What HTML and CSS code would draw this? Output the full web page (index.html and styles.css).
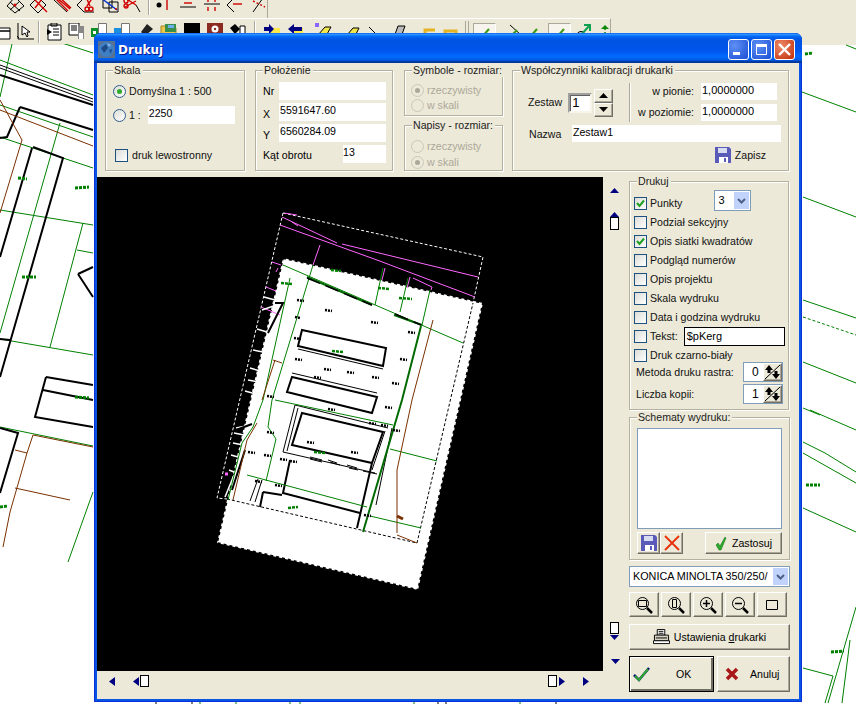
FILE: index.html
```html
<!DOCTYPE html>
<html lang="pl">
<head>
<meta charset="utf-8">
<title>Drukuj</title>
<link rel="stylesheet" href="styles.css">
</head>
<body>
<div class="desktop">
  <svg class="map" width="856" height="704" viewBox="0 0 856 704">
    <g class="g1">
      <path d="M0 60L93 95M12 44L0 97M0 105L93 137M0 137L93 168M0 210L93 225M60 123L0 333M0 339L93 355M83 223L50 347M77 250L93 253M0 427L93 446M93 492L68 562M62 43L93 53"/>
      <path d="M803 197L856 217M803 300L856 318M803 362L856 383M803 408L820 415M810 410L856 430M803 442L825 453L856 472M803 453L856 483M803 508L856 532M856 607L828 703M803 668L833 676L825 703M802 92L856 112M846 45L856 49M850 640L842 703"/>
      <path class="dash" d="M803 317L856 335"/>
      <path d="M200 702V704M236 702V704M290 702V704M300 702V704M414 702V704M520 702V704"/>
    </g>
    <g class="b1"><path d="M0 65L93 99M0 68L93 102M156 702V704M192 702V704M326 700H332M421 700H427M438 702V704M446 702V704M556 702V704M560 700H568"/></g>
    <g class="b2">
      <path d="M0 75L93 105M20 107L93 130M20 107L7 137L0 138M32 148L0 257M33 147L63 158L0 377M0 339L10 340M78 274L93 267M78 274L93 297M46 377L93 385M46 377L35 417L93 427M43 390L93 400M0 428L18 433L0 493"/>
    </g>
    <g class="br">
      <path d="M0 110L93 146M0 100L22 140L0 213M33 435L27 453L10 512L3 547M15 488L70 500M15 450L27 453M33 435L93 447"/>
    </g>
    <g class="lb">
      <path d="M18 178l9 1M75 188l14-1M22 277l14 0M75 397l14 1M0 507l8-1M805 54l8-1M806 485l14 0M831 652l13-1"/>
    </g>
  </svg>

  <div class="bars">
    <div class="tb tb1">
      <span class="tbtn first1"><svg width="20" height="16" viewBox="0 0 20 16"><path class="i-k" d="M1 8L9-1L18 8L9 15ZM4 4L14 13M14 3L4 12"/><circle cx="9" cy="7" r="1.500" fill="#d00"/></svg></span>
      <span class="tbtn"><svg width="20" height="16" viewBox="0 0 20 16"><path class="i-k" d="M1 7L9-1L17 7L9 15Z"/><path class="i-r" d="M4 0L18 14M13 1L6 10"/></svg></span>
      <span class="tbtn"><svg width="20" height="16" viewBox="0 0 20 16"><path class="i-r" d="M2 0L15 13M4 0L17 11M6-1L18 10"/><path class="i-k" d="M1 2L14 14"/></svg></span>
      <span class="tbtn"><svg width="20" height="16" viewBox="0 0 20 16"><path class="i-k" d="M1 7L8 0M1 7L8 14L18 14"/><path class="i-r" d="M10-1L14 8M17-1L11 8"/><circle class="i-r" cx="11" cy="11" r="2"/><circle class="i-r" cx="15" cy="11" r="2"/></svg></span>
      <span class="tbtn"><svg width="20" height="16" viewBox="0 0 20 16"><path class="i-k" d="M3 0H12V10H3ZM9 4H18V14H9Z"/><path class="i-b" d="M1 0L17 12"/><circle cx="16" cy="11" r="1" fill="#d00"/></svg></span>
      <span class="tbtn"><svg width="20" height="16" viewBox="0 0 20 16"><path class="i-r" d="M2 0L13 7M2 9L13 3"/><circle class="i-r" cx="3" cy="3" r="2"/><circle class="i-r" cx="3" cy="8" r="2"/><path class="i-k" d="M13 7L17 14"/></svg></span>
      <span class="sep sep1"></span>
      <span class="tbtn"><svg width="18" height="16" viewBox="0 0 18 16"><circle cx="3" cy="7" r="2.500" fill="#000"/><path class="i-r" d="M11 0V12"/></svg></span>
      <span class="tbtn"><svg width="18" height="16" viewBox="0 0 18 16"><path class="i-r" d="M5 5H13"/><path class="i-k" d="M1 9H17"/></svg></span>
      <span class="tbtn"><svg width="18" height="16" viewBox="0 0 18 16"><path class="i-r" d="M5 0V4M12 0V4M5 9V13M12 9V13"/><path class="i-k" d="M1 6H17"/></svg></span>
      <span class="tbtn"><svg width="18" height="16" viewBox="0 0 18 16"><path class="i-k" d="M8 0L1 7L8 14"/><path class="i-r" d="M7 6H16"/></svg></span>
      <span class="tbtn"><svg width="18" height="16" viewBox="0 0 18 16"><path class="i-k" d="M13 0L3 14"/><path class="i-rd" d="M3 3L15 9"/></svg></span>
    </div>
    <div class="tb tb2">
      <span class="tbtn first2"><svg width="18" height="18" viewBox="0 0 18 18"><path class="i-kw" d="M2 8H16V16H2ZM2 5H16V8H2Z"/></svg></span>
      <span class="tbtn"><svg width="18" height="18" viewBox="0 0 18 18"><path class="i-k" d="M1 0V16H17M2 15L0 13"/><path class="i-kw" d="M5 3L5 12L8 10L10 14L11 13L10 9L13 9Z"/></svg></span>
      <span class="sep sep2"></span>
      <span class="tbtn"><svg width="18" height="18" viewBox="0 0 18 18"><path class="i-kw" d="M3 2H16V17H3Z"/><path d="M2 6L7 9L2 12Z"/><path class="i-k" d="M8 6H14M8 9H14M8 12H14M6 0H12V3H6Z"/></svg></span>
      <span class="tbtn"><svg width="18" height="18" viewBox="0 0 18 18"><path class="i-kw" d="M1 0H11V12H1Z"/><path class="i-k" d="M3 3H9M3 5H9M3 7H9"/><path fill="#888" d="M10 3H16V16H10Z"/><path fill="#fff" d="M11 10H15V16H11Z"/></svg></span>
      <span class="tbtn"><svg width="18" height="18" viewBox="0 0 18 18"><path fill="#fff" stroke="#777" d="M7.500 0.500H15.500V13.500H7.500Z"/><path fill="#0a8f2a" d="M0 5H7V14H0Z"/><path fill="#fff" d="M2 8H5V11H2Z"/></svg></span>
      <span class="tbtn"><svg width="18" height="18" viewBox="0 0 18 18"><path fill="#fff" stroke="#777" d="M7.500 0.500H15.500V13.500H7.500Z"/><path fill="#1a8fe0" d="M0 5H7V10H0Z"/></svg></span>
      <span class="tbtn"><svg width="18" height="18" viewBox="0 0 18 18"><path fill="#222" d="M10 1L16 6L8 13L4 9Z"/><path fill="#bbb" d="M4 10L7 13L2 17L1 15Z"/></svg></span>
      <span class="tbtn"><svg width="18" height="18" viewBox="0 0 18 18"><path fill="#eec84a" stroke="#a08020" d="M1 3H7L8 5H16V15H1Z"/><path fill="#3a8f4a" d="M5 1H16V9H5Z"/><path fill="#6ab0f0" d="M8 2H14V5H8Z"/></svg></span>
      <span class="tbtn"><svg width="18" height="18" viewBox="0 0 18 18"><path d="M1 0H17V14H1Z"/></svg></span>
      <span class="tbtn"><svg width="18" height="18" viewBox="0 0 18 18"><path fill="#8a2a20" d="M1 0H17V14H1Z"/><circle cx="9" cy="6" r="3.500" fill="#fff"/><circle cx="9" cy="6" r="1.200" fill="#8a2a20"/></svg></span>
      <span class="tbtn"><svg width="18" height="18" viewBox="0 0 18 18"><path d="M1 5L6 1L11 6L6 11Z"/><path class="i-kw" d="M11 3H16V14H11Z"/><path d="M4 12H9V15H4Z"/></svg></span>
      <span class="sep sep3"></span>
      <span class="tbtn"><svg width="18" height="18" viewBox="0 0 18 18"><path fill="#ffe84a" d="M7 5H17V13H7Z"/><path fill="#000080" d="M1 4H6V1L11 6L6 11V8H1Z"/></svg></span>
      <span class="tbtn"><svg width="18" height="18" viewBox="0 0 18 18"><path fill="#ffe84a" d="M7 5H17V13H7Z"/><path fill="#000080" d="M16 4H8V1L2 6L8 11V8H16Z"/></svg></span>
      <span class="tbtn t-pencil"><svg width="18" height="18" viewBox="0 0 18 18"><path fill="#86f" d="M0 0H4V4H0Z"/><path fill="#f2e64a" stroke="#000" d="M3 12L10 4H16L11 13Z"/></svg></span>
      <span class="tbtn t-eraser"><svg width="18" height="18" viewBox="0 0 18 18"><path fill="#f2e64a" stroke="#000" d="M2 12L8 5H14L10 13Z"/></svg></span>
      <span class="tbtn t-line"><svg width="18" height="18" viewBox="0 0 18 18"><path class="i-k" d="M4 4L14 14"/></svg></span>
      <span class="tbtn t-para"><svg width="18" height="18" viewBox="0 0 18 18"><path fill="#bbb" stroke="#000" d="M8 3H15L11 14H4Z"/></svg></span>
      <span class="tbtn t-undo"><svg width="18" height="18" viewBox="0 0 18 18"><path class="i-y" d="M15 7H5V13H15"/></svg></span>
      <span class="tbtn t-redo"><svg width="18" height="18" viewBox="0 0 18 18"><path class="i-y" d="M3 13V8H14V13"/></svg></span>
      <span class="sep sep4"></span>
      <span class="tbtn pressed"><svg width="18" height="18" viewBox="0 0 18 18"><path class="i-g" d="M5 15L13 6"/></svg></span>
      <span class="tbtn t-a"><svg width="18" height="18" viewBox="0 0 18 18"><path class="i-k" d="M4 2L15 12"/><path class="i-g" d="M5 13L11 7"/></svg></span>
      <span class="tbtn t-b"><svg width="18" height="18" viewBox="0 0 18 18"><path class="i-g" d="M5 14L12 6"/></svg></span>
      <span class="tbtn pressed t-c"><svg width="18" height="18" viewBox="0 0 18 18"><path class="i-g" d="M5 15L13 6"/></svg></span>
      <span class="tbtn t-d"><svg width="18" height="18" viewBox="0 0 18 18"><circle cx="7" cy="13" r="4.500" fill="#ccc" stroke="#000"/><path class="i-g2" d="M7 12L15 3M10 2H16V8"/></svg></span>
      <span class="tbtn t-e"><svg width="18" height="18" viewBox="0 0 18 18"><path d="M9 2L13 6H5Z" fill="#0a8a0a"/><path class="i-gd" d="M9 5V18"/></svg></span>
    </div>
  </div>

  <section class="window">
    <header class="titlebar">
      <svg class="appicon" width="17" height="17" viewBox="0 0 17 17"><rect width="17" height="17" fill="#5a7290"/><circle cx="8.500" cy="8.500" r="7.500" fill="#3f7fc4"/><path fill="#1f4a88" d="M3 7L8 3L10 7L6 12ZM11 9L14 8L13 13Z"/><path fill="#8fb8e4" d="M9 2L13 4L11 6Z"/></svg>
      <span class="title">Drukuj</span>
      <span class="wbtn wblue"><svg width="21" height="21" viewBox="0 0 21 21"><path fill="#fff" d="M5 13H12V16H5Z"/></svg></span>
      <span class="wbtn wblue"><svg width="21" height="21" viewBox="0 0 21 21"><path fill="none" stroke="#fff" d="M5.500 5.500H15.500V15.500H5.500Z"/><path fill="#fff" d="M5 5H16V8H5Z"/></svg></span>
      <span class="wbtn wred"><svg width="21" height="21" viewBox="0 0 21 21"><path stroke="#fff" stroke-width="2.400" d="M5 5L16 16M16 5L5 16"/></svg></span>
    </header>
    <div class="client">
      <div class="top">
        <div class="group skala">
          <span class="legend">Skala</span>
          <div class="row r18"><span class="radio on"></span><span class="lab l3">Domyślna 1 : 500</span></div>
          <div class="row r18 mt6"><span class="radio"></span><span class="lab l3">1 :</span><span class="field f-skala">2250</span></div>
          <div class="row check-row"><span class="check"></span><span class="lab l4">druk lewostronny</span></div>
        </div>
        <div class="group polozenie">
          <span class="legend">Położenie</span>
          <div class="prow"><span class="plab">Nr</span><span class="field grow"></span></div>
          <div class="prow"><span class="plab low">X</span><span class="field grow">5591647.60</span></div>
          <div class="prow"><span class="plab low">Y</span><span class="field grow">6560284.09</span></div>
          <div class="prow"><span class="plab kat">Kąt obrotu</span><span class="field f-kat">13</span></div>
        </div>
        <div class="midcol">
          <div class="group small">
            <span class="legend">Symbole - rozmiar:</span>
            <div class="row r15"><span class="radio dis on"></span><span class="lab l3 off">rzeczywisty</span></div>
            <div class="row r15"><span class="radio dis"></span><span class="lab l3 off">w skali</span></div>
          </div>
          <div class="group small">
            <span class="legend">Napisy - rozmiar:</span>
            <div class="row r16"><span class="radio dis"></span><span class="lab l3 off">rzeczywisty</span></div>
            <div class="row r16"><span class="radio dis on"></span><span class="lab l3 off">w skali</span></div>
          </div>
        </div>
        <div class="group wsp">
          <span class="legend">Współczynniki kalibracji drukarki</span>
          <div class="wsp-top">
            <div class="zestaw">
              <span class="lab">Zestaw</span>
              <span class="sunken">1</span>
              <span class="spin">
                <span class="btn spinb"><svg width="9" height="5" viewBox="0 0 9 5"><path d="M4.500 0L9 5H0Z"/></svg></span>
                <span class="btn spinb"><svg width="9" height="5" viewBox="0 0 9 5"><path d="M4.500 5L9 0H0Z"/></svg></span>
              </span>
            </div>
            <span class="vsep"></span>
            <div class="coef">
              <div class="crow"><span class="clab">w pionie:</span><span class="field f-coef">1,0000000</span></div>
              <div class="crow"><span class="clab">w poziomie:</span><span class="field f-coef">1,0000000</span></div>
            </div>
          </div>
          <div class="nazwa"><span class="lab n-lab">Nazwa</span><span class="field f-nazwa">Zestaw1</span></div>
          <div class="zapisz">
            <svg width="16" height="16" viewBox="0 0 16 16"><use href="#floppy"/></svg><span class="lab">Zapisz</span>
          </div>
        </div>
      </div>

      <div class="main">
        <div class="leftcol">
          <div class="preview">
            <svg class="sheet" width="506" height="494" viewBox="97 177 506 494">
              <path fill="#fff" d="M283 258L483 303L418 590L217 543Z"/>
              <path class="jag" d="M283 258L483 303L418 590L217 543Z"/>
              <g class="wd"><path d="M283 213L483 257L473 303M283 213L217 498L227 499"/></g>
              <g class="kd"><path d="M227 499L417 543L473 303"/></g>
              <g class="mg"><path d="M282 217L337 243M342 244L478 277M280 225L377 260L475 297M320 245L313 265M385 268L382 280M410 277L407 288M413 278L432 287L431 290M272 262L281 265M266 287L276 291M261 307L280 315M284 213L297 215M292 222L298 226M278 268L276 272"/></g>
              <g class="wl"><path d="M264 297L275 300M262 310L282 303L268 333M257 329L267 332M253 350L263 352M250 368L260 371M248 380L258 382M245 391L256 394M236 428L256 424M234 433L249 436M233 443L243 445M231 455L238 457M229 470L234 472M225 497L234 475"/></g>
              <g class="k2"><path d="M275 303L283 303L268 333M302 330L386 348L383 366L298 346ZM292 377L377 397L372 413L287 392ZM302 413L383 432L372 463L292 445ZM290 460L283 493L360 513M263 492L282 495M263 492L260 507M372 463L357 528M236 430L252 424M245 450L232 490"/></g>
              <g class="k1"><path d="M298 349L383 369M292 373L377 393M295 405L388 428M295 405L283 452L375 473M298 408L287 451M385 431L372 470M310 457L322 460M310 459L322 462M328 460L337 463M347 465L357 468M363 471L377 474M349 468L358 470M330 462L340 465M392 428L376 505M258 479L250 501M262 480L255 502"/></g>
              <g class="g1"><path d="M283 265L463 343M313 265L272 400L268 427L276 439L266 481M290 278L263 400L253 427L242 443L228 500M383 268L375 305M408 278L400 312M430 290L422 325M275 400L393 425M390 449L437 461M247 475L367 507M370 516L421 528"/></g>
              <g class="g2"><path d="M307 277L372 305M394 315L422 325"/></g>
              <path class="k15" d="M307 278L372 305M395 314L421 325"/>
              <path class="g2" d="M421 326L402 400L363 532"/>
              <g class="br"><path d="M433 320L412 400L397 470L397 533M397 535L417 543M273 360L282 363M275 360L262 400M257 423L247 440L233 500"/></g>
              <path class="br3" d="M397 516L403 519"/>
              <path class="lb-k" d="M325 310l7 1M371 322l7 1M408 332l7 1M294 338l7 1M295 359l7 1M324 369l7 1M347 372l7 1M372 377l7 1M400 359l7 1M392 383l7 1M314 377l7 1M267 396l7 1M297 300l7 1M295 317l5 1M328 409l7 1M385 407l7 1M307 442l7 1M351 452l7 1M267 432l7 1M248 452l7 1M264 455l7 1M280 459l7 1M290 461l7 1M255 481l7 1M275 485l7 1M364 515l7 1M393 430l7 1M369 423l7 1M381 425l7 1"/>
              <path class="lb-g" d="M331 270l10 1M281 283l11 1M378 288l12 1M399 298l13 1M332 351l11 1M314 452l11 1M288 508l10-1"/>
              <path class="pk" d="M225 474H228"/>
            </svg>
          </div>
          <div class="hscroll">
            <svg class="ar a1" width="6" height="9" viewBox="0 0 6 9"><path d="M6 0L0 4.500L6 9Z"/></svg>
            <svg class="ar a2" width="6" height="9" viewBox="0 0 6 9"><path d="M6 0L0 4.500L6 9Z"/></svg>
            <span class="thumb-h t1"></span>
            <span class="thumb-h t2"></span>
            <svg class="ar a3" width="6" height="9" viewBox="0 0 6 9"><path d="M0 0L6 4.500L0 9Z"/></svg>
            <svg class="ar a4" width="6" height="9" viewBox="0 0 6 9"><path d="M0 0L6 4.500L0 9Z"/></svg>
          </div>
        </div>

        <div class="vscroll">
          <svg class="ar v1" width="9" height="5" viewBox="0 0 9 5"><path d="M4.500 0L9 5H0Z"/></svg>
          <svg class="ar v2" width="9" height="5" viewBox="0 0 9 5"><path d="M4.500 0L9 5H0Z"/></svg>
          <span class="thumb-v"></span>
          <span class="thumb-v t-auto"></span>
          <svg class="ar v3" width="9" height="5" viewBox="0 0 9 5"><path d="M4.500 5L9 0H0Z"/></svg>
          <svg class="ar v4" width="9" height="5" viewBox="0 0 9 5"><path d="M4.500 5L9 0H0Z"/></svg>
        </div>

        <div class="side">
          <div class="group drukuj">
            <span class="legend">Drukuj</span>
            <div class="crow-a first">
              <span class="check on"><svg width="11" height="11" viewBox="0 0 11 11"><path d="M2 5L4.500 8L9 2.500"/></svg></span><span class="lab l3">Punkty</span>
              <span class="combo c-mini"><span class="ctext">3</span><span class="cbtn"><svg width="9" height="6" viewBox="0 0 9 6"><path d="M1 1L4.500 4.500L8 1"/></svg></span></span>
            </div>
            <div class="crow-a"><span class="check"></span><span class="lab l3">Podział sekcyjny</span></div>
            <div class="crow-a"><span class="check on"><svg width="11" height="11" viewBox="0 0 11 11"><path d="M2 5L4.500 8L9 2.500"/></svg></span><span class="lab l3">Opis siatki kwadratów</span></div>
            <div class="crow-a"><span class="check"></span><span class="lab l3">Podgląd numerów</span></div>
            <div class="crow-a"><span class="check"></span><span class="lab l3">Opis projektu</span></div>
            <div class="crow-a"><span class="check"></span><span class="lab l3">Skala wydruku</span></div>
            <div class="crow-a"><span class="check"></span><span class="lab l3">Data i godzina wydruku</span></div>
            <div class="crow-a"><span class="check"></span><span class="lab l3">Tekst:</span><span class="tekst">$pKerg</span></div>
            <div class="crow-a"><span class="check"></span><span class="lab l3">Druk czarno-biały</span></div>
            <div class="num-row n1"><span class="lab">Metoda druku rastra:</span><span class="num"><span class="nval">0</span><span class="btn nbtn"><svg width="17" height="16" viewBox="0 0 17 16"><use href="#updown"/></svg></span></span></div>
            <div class="num-row"><span class="lab">Liczba kopii:</span><span class="num"><span class="nval">1</span><span class="btn nbtn"><svg width="17" height="16" viewBox="0 0 17 16"><use href="#updown"/></svg></span></span></div>
          </div>

          <div class="group schematy">
            <span class="legend">Schematy wydruku:</span>
            <div class="listbox"></div>
            <div class="sch-btns">
              <span class="btn sq"><svg width="16" height="16" viewBox="0 0 16 16"><use href="#floppy"/></svg></span>
              <span class="btn sq"><svg width="16" height="16" viewBox="0 0 16 16"><path d="M1 1L15 15M15 1L1 15" stroke="#e8300a" stroke-width="1.800"/></svg></span>
              <span class="btn zast"><svg width="12" height="15" viewBox="0 0 12 15"><path fill="#2fa82f" stroke="#0a6a0a" stroke-width=".5" d="M1 9L3 7L5 10L10 1L11 2L6 14H4Z"/></svg><span>Zastosuj</span></span>
            </div>
          </div>

          <div class="combo c-printer"><span class="ctext">KONICA MINOLTA 350/250/</span><span class="cbtn"><svg width="9" height="6" viewBox="0 0 9 6"><path d="M1 1L4.500 4.500L8 1"/></svg></span></div>

          <div class="zoombar">
            <span class="btn zb"><svg width="18" height="18" viewBox="0 0 18 18"><circle class="lens" cx="7.500" cy="7.500" r="6"/><path class="lens" d="M3.500 4.500H11.500V10.500H3.500Z"/><path class="hand" d="M12 12L17 17"/></svg></span>
            <span class="btn zb"><svg width="18" height="18" viewBox="0 0 18 18"><circle class="lens" cx="7.500" cy="7.500" r="6"/><path class="lens" d="M5.500 3.500H9.500V11.500H5.500Z"/><path class="hand" d="M12 12L17 17"/></svg></span>
            <span class="btn zb"><svg width="18" height="18" viewBox="0 0 18 18"><circle class="lens" cx="7.500" cy="7.500" r="6"/><path class="plus" d="M4 7.500H11M7.500 4V11"/><path class="hand" d="M12 12L17 17"/></svg></span>
            <span class="btn zb"><svg width="18" height="18" viewBox="0 0 18 18"><circle class="lens" cx="7.500" cy="7.500" r="6"/><path class="plus" d="M4 7.500H11"/><path class="hand" d="M12 12L17 17"/></svg></span>
            <span class="btn zb"><svg width="14" height="12" viewBox="0 0 14 12"><path class="lens" d="M1.500 1.500H12.500V10.500H1.500Z"/></svg></span>
          </div>

          <div class="btn ustaw">
            <svg width="17" height="16" viewBox="0 0 18 17"><path fill="#fff" stroke="#000" d="M4.500 0.500H12.500V6.500H4.500Z"/><path fill="#d8d4c4" stroke="#000" d="M1.500 6.500H16.500V12.500H1.500Z"/><path fill="#fff" stroke="#000" d="M0.500 12.500H17.500V15.500H0.500Z"/><path stroke="#000" d="M6 2.500H11M6 4.500H11M3 9.500H15"/></svg>
            <span class="u-text">Ustawienia <u>d</u>rukarki</span>
          </div>

          <div class="okrow">
            <span class="btn ok"><svg width="17" height="17" viewBox="0 0 17 17"><path class="okmark" d="M1 9L6 14L16 2"/><path class="okmark2" d="M2 10L6 14L15 3"/></svg><span class="oktext">OK</span></span>
            <span class="btn cancel"><svg width="14" height="14" viewBox="0 0 14 14"><path class="xmark" d="M2 2L12 12M12 2L2 12"/></svg><span class="canceltext">Anuluj</span></span>
          </div>
        </div>
      </div>
    </div>
  </section>

  <svg class="defs" width="0" height="0">
    <symbol id="floppy" viewBox="0 0 16 16">
      <path fill="#5a5ab8" d="M0 0H14L16 2V16H0Z"/>
      <path fill="#d8dcf0" d="M3 1H12V6H3Z"/>
      <path fill="#fff" d="M4 10H13V16H4Z"/>
      <path fill="#5a5ab8" d="M9 11H11V15H9Z"/>
    </symbol>
    <symbol id="updown" viewBox="0 0 17 16">
      <path fill="none" stroke="#000" d="M1 15L16 1"/>
      <path d="M5 1L9 6H6.500V9H3.500V6H1Z"/>
      <path d="M12 15L8 10H10.500V7H13.500V10H16Z"/>
    </symbol>
  </svg>
</div>
</body>
</html>
```
FILE: styles.css
```css
* { box-sizing: border-box; }
html, body { margin: 0; padding: 0; }
body { width: 856px; height: 704px; overflow: hidden; background: #ece9d8; font: 10.6px/13px "Liberation Sans", Arial, sans-serif; color: #000; }
.desktop { position: relative; width: 856px; height: 704px; overflow: hidden; background: #ece9d8; }

/* background map */
.map { position: absolute; left: 0; top: 0; }
.map { background: linear-gradient(#ece9d8 0 45px, #fff 45px); }
.map path, .sheet path { fill: none; }
.sheet path[fill="#fff"] { fill: #fff; }
.g1 path, .g1 { stroke: #008000; stroke-width: 1; fill: none; }
.g1 .dash { stroke-dasharray: 3 2; }
.g2 path, path.g2 { stroke: #006a00; stroke-width: 2; fill: none; }
.b1 path { stroke: #000; stroke-width: 1; }
.b2 path { stroke: #000; stroke-width: 2; }
.br path { stroke: #7a3000; stroke-width: 1; }
.lb path { stroke: #008000; stroke-width: 3; stroke-dasharray: 3 1; }

/* toolbars */
.bars { position: absolute; left: 0; top: 0; width: 856px; height: 45px; display: flex; flex-direction: column; }
.tb { display: flex; background: #ece9d8; }
.tb1 { width: 268px; height: 19px; border-bottom: 1px solid #fff; border-right: 1px solid #aca899; align-items: flex-end; padding-bottom: 4px; overflow: hidden; }
.tb2 { width: 611px; height: 26px; align-items: flex-start; padding-top: 4px; border-top: 1px solid #fff; border-right: 1px solid #aca899; margin-top: -1px; position: relative; }
.tbtn { width: 23px; height: 18px; flex: none; display: flex; align-items: center; justify-content: center; }
.tb1 .tbtn { height: 16px; width: 23.500px; }
.tb1 .first1 { margin-left: 4px; }
.tb2 .first2 { margin-left: -9px; }
.sep { flex: none; width: 2px; border-left: 1px solid #aca899; border-right: 1px solid #fff; height: 22px; }
.sep1 { margin: 0 3px 0 3px; align-self: flex-start; height: 19px; }
.tb1 .sep1 { margin-top: -4px; }
.sep2 { margin: -2px 2px 0 1px; }
.sep3 { margin: -2px 4px 0 5px; }
.sep4 { margin: -2px 4px 0 3px; width: 4px; border-right-color: #aca899; }
.t-pencil { margin-left: 6px; }
.t-eraser { margin-left: 7px; }
.t-line { margin-left: -3px; }
.t-para { margin-left: 2px; }
.t-undo { margin-left: 7px; }
.t-redo { margin-left: -1px; }
.pressed { border: 1px solid #fff; border-top-color: #aca899; border-left-color: #aca899; background: #f6f4ec; }
.t-a { margin-left: 7px; }
.t-b { margin-left: -4px; }
.t-c { margin-left: 3px; }
.t-d { margin-left: 0; }
.t-e { margin-left: -1px; }
.i-k { fill: none; stroke: #000; stroke-width: 1; }
.i-kw { fill: #fff; stroke: #000; stroke-width: 1; }
.i-r { fill: none; stroke: #d00000; stroke-width: 1.400; }
.i-rd { fill: none; stroke: #d00000; stroke-width: 1.400; stroke-dasharray: 2 2; }
.i-b { fill: none; stroke: #0030d0; stroke-width: 1.400; }
.i-y { fill: none; stroke: #e6b422; stroke-width: 3; }
.i-g { fill: none; stroke: #3f9a10; stroke-width: 2; }
.i-g2 { fill: none; stroke: #10a050; stroke-width: 2; }
.i-gd { fill: none; stroke: #008000; stroke-width: 1.500; stroke-dasharray: 2 2; }

/* window */
.window { position: absolute; left: 94px; top: 33px; width: 708px; height: 669px; padding: 0 3px 3px; background: #0a54e4; border-radius: 7px 7px 0 0; box-shadow: inset 1px 0 #0831d9, inset -1px 0 #0831d9, inset 0 -1px #0831d9; display: flex; flex-direction: column; }
.titlebar { height: 30px; flex: none; margin: 0 -3px; padding: 3px 7px 0 4px; display: flex; align-items: center; color: #fff; border-radius: 7px 7px 0 0; background: linear-gradient(180deg, #0058ee 0%, #3593ff 4%, #288eff 6%, #127dff 8%, #036ffc 10%, #0262ee 14%, #0057e5 20%, #0054e3 24%, #0055eb 56%, #005bf5 66%, #026afe 76%, #0062ef 86%, #0052d6 92%, #0040ab 94%, #003092 100%); }
.appicon { flex: none; }
.title { flex: 1; margin-left: 3px; font: bold 12px/16px "DejaVu Sans", sans-serif; text-shadow: 1px 1px 0 #0f1089; }
.wbtn { flex: none; width: 21px; height: 21px; margin-left: 2px; border: 1px solid #fff; border-radius: 3px; display: flex; overflow: hidden; }
.wbtn svg { margin: -1px; flex: none; }
.wblue { background: radial-gradient(circle at 30% 30%, #5f90f5, #2458d8 85%); }
.wred { background: radial-gradient(circle at 30% 30%, #ee8a6a, #c83a15 85%); }
.client { flex: 1; background: #ece9d8; display: flex; flex-direction: column; min-height: 0; }

/* shared */
.group { position: relative; border: 1px solid #b4b19f; box-shadow: 1px 1px 0 #fff, inset 1px 1px 0 #fff; }
.legend { position: absolute; left: 7px; top: -7px; background: #ece9d8; padding: 0 2px 0 1px; line-height: 13px; white-space: nowrap; color: #222; }
.row { display: flex; align-items: center; }
.r18 { height: 18px; }
.r16 { height: 16px; }
.r15 { height: 15px; }
.mt6 { margin-top: 6px; }
.lab { white-space: nowrap; color: #111; }
.l3 { margin-left: 3px; }
.l4 { margin-left: 4px; }
.off { color: #aca899; }
.field { display: block; height: 18px; background: #fff; padding: 0 1px; line-height: 15px; white-space: nowrap; overflow: hidden; }
.grow { flex: 1; }
.radio { flex: none; width: 13px; height: 13px; border: 1px solid #2f5d8f; border-radius: 50%; background: linear-gradient(135deg, #dcdcd7, #fff); position: relative; display: flex; align-items: center; justify-content: center; }
.radio.on::after { content: ""; width: 5px; height: 5px; border-radius: 50%; background: #2faa2f; }
.radio.dis { border-color: #cac8bb; background: #ece9d8; }
.radio.dis.on::after { background: #aca899; }
.check { flex: none; width: 13px; height: 13px; border: 1px solid #1c5180; background: linear-gradient(135deg, #dcdcd7, #fff); display: flex; }
.check path { fill: none; stroke: #21a121; stroke-width: 2; }
.btn { background: #ece9d8; border: 1px solid; border-color: #fff #716f64 #716f64 #fff; box-shadow: inset -1px -1px 0 #aca899; display: flex; align-items: center; justify-content: center; }

/* top row */
.top { height: 114px; flex: none; padding: 7px 0 0 8px; display: flex; align-items: flex-start; }
.skala { width: 140px; height: 101px; margin-right: 10px; padding: 11px 0 0 7px; display: flex; flex-direction: column; }
.f-skala { width: 87px; margin-left: 7px; }
.check-row { margin: 25px 0 0 2px; }
.polozenie { width: 138px; height: 101px; margin-right: 11px; padding: 11px 6px 0 7px; }
.prow { display: flex; height: 18px; margin-bottom: 3px; align-items: center; }
.plab { width: 16px; flex: none; }
.low { padding-top: 4px; }
.kat { width: 80px; padding-top: 3px; }
.f-kat { flex: 1; padding-left: 0; }
.midcol { width: 99px; margin-right: 9px; display: flex; flex-direction: column; gap: 9px; }
.small { height: 46px; padding: 12px 0 0 6px; }
.wsp { width: 277px; height: 101px; padding: 12px 8px 0 15px; }
.wsp-top { display: flex; height: 39px; }
.zestaw { display: flex; align-items: center; width: 93px; flex: none; }
.sunken { width: 24px; height: 20px; margin-left: 6px; background: #fff; border: 2px solid; border-color: #a0a0a0 #f7f5ea #f7f5ea #a0a0a0; box-shadow: inset 1px 1px 0 #606060; padding: 0 0 0 2px; font-size: 13px; line-height: 16px; flex: none; }
.spin { display: flex; flex-direction: column; width: 19px; margin-left: 2px; flex: none; }
.spinb { height: 14px; }
.vsep { flex: none; width: 2px; height: 39px; border-left: 1px solid #aca899; border-right: 1px solid #fff; margin-left: 8px; }
.coef { flex: 1; display: flex; flex-direction: column; gap: 4px; align-items: flex-end; padding-right: 3px; }
.crow { display: flex; height: 17px; align-items: center; gap: 7px; }
.f-coef { width: 76px; height: 17px; font-size: 11px; }
.clab { white-space: nowrap; color: #111; }
.nazwa { display: flex; height: 17px; margin-top: 3px; align-items: center; }
.n-lab { width: 43px; margin-left: 1px; flex: none; padding-top: 2px; }
.f-nazwa { width: 209px; height: 17px; flex: none; }
.zapisz { display: flex; align-items: center; justify-content: flex-end; gap: 4px; margin: 5px 14px 0 0; }

/* main row */
.main { flex: 1; display: flex; min-height: 0; }
.leftcol { width: 506px; flex: none; display: flex; flex-direction: column; }
.preview { height: 494px; flex: none; background: #000; overflow: hidden; }
.sheet { display: block; }
.jag { stroke: #000; stroke-width: 2; stroke-dasharray: 3 3; }
.wd path { stroke: #fff; stroke-width: 1; stroke-dasharray: 3 2; }
.kd path { stroke: #000; stroke-width: 1; stroke-dasharray: 3 2; }
.mg path { stroke: #ff66ff; stroke-width: 1; }
.wl path { stroke: #fff; stroke-width: 1.500; }
.k2 path { stroke: #000; stroke-width: 2; }
.k1 path { stroke: #000; stroke-width: 1; }
path.k15 { stroke: #000; stroke-width: 1.500; stroke-dasharray: 14 6; }
path.br3 { stroke: #7a3000; stroke-width: 3; }
path.lb-k { stroke: #000; stroke-width: 2.500; stroke-dasharray: 2 1; }
path.lb-g { stroke: #008000; stroke-width: 2.500; stroke-dasharray: 3 1; }
path.pk { stroke: #ff66ff; stroke-width: 3; }

.ar { display: block; flex: none; fill: #000080; }
.hscroll { flex: 1; display: flex; align-items: flex-start; padding-top: 4px; }
.hscroll .ar { margin-top: 2px; }
.a1 { margin-left: 12px; }
.a2 { margin-left: 18px; }
.thumb-h { width: 9px; height: 12px; border: 1px solid #000; background: #fff; flex: none; }
.t1 { margin-left: 1px; }
.t2 { margin-left: 399px; }
.a3 { margin-left: 2px; }
.a4 { margin-left: 18px; }

.vscroll { width: 26px; flex: none; display: flex; flex-direction: column; align-items: flex-start; padding: 11px 0 0 4px; }
.v1 { margin-left: 3px; }
.v2 { margin: 19px 0 0 3px; }
.thumb-v { width: 9px; height: 13px; border: 1px solid #000; background: #fff; margin-left: 3px; flex: none; }
.t-auto { margin-top: 392px; height: 12px; }
.v3 { margin: 1px 0 0 3px; }
.v4 { margin: 19px 0 0 4px; }

.side { width: 161px; flex: none; padding-top: 4px; display: flex; flex-direction: column; }
.drukuj { width: 160px; height: 229px; padding: 11px 0 0 4px; }
.crow-a { display: flex; align-items: center; height: 19px; }
.crow-a.first { height: 20px; }
.c-mini { width: 37px; height: 21px; margin-left: 32px; margin-top: -5px; }
.tekst { margin-left: 6px; width: 101px; height: 19px; border: 1px solid #000; background: #fff; padding: 0 0 0 2px; font-size: 11px; line-height: 16px; flex: none; }
.num-row { display: flex; align-items: center; justify-content: space-between; height: 20px; padding: 0 5px 0 2px; margin-top: 2px; }
.n1 { margin-top: -3px; }
.num { width: 40px; height: 20px; background: #fff; border: 1px solid #7f9db9; display: flex; align-items: center; }
.nval { width: 19px; padding-left: 8px; font-size: 12px; flex: none; }
.nbtn { width: 19px; height: 18px; flex: none; }

.combo { display: flex; align-items: stretch; background: #fff; border: 1px solid #7f9db9; padding: 1px; overflow: hidden; }
.ctext { flex: 1; white-space: nowrap; overflow: hidden; font-size: 11px; line-height: 16px; padding-left: 2px; }
.cbtn { width: 15px; flex: none; background: #c1d3fb; display: flex; align-items: center; justify-content: center; }
.cbtn path { fill: none; stroke: #4d6185; stroke-width: 2; }

.schematy { width: 161px; height: 143px; margin-top: 7px; padding: 10px 7px 0 7px; }
.listbox { height: 101px; background: #fff; border: 1px solid #7f9db9; }
.sch-btns { display: flex; margin-top: 3px; height: 22px; }
.sq { width: 23px; height: 22px; }
.zast { width: 77px; height: 22px; margin-left: auto; gap: 5px; }
.c-printer { width: 161px; height: 21px; margin-top: 6px; }
.c-printer .ctext { line-height: 17px; font-size: 10.8px; }
.zoombar { display: flex; gap: 2px; margin-top: 5px; height: 25px; }
.zb { width: 30px; height: 25px; flex: none; }
.lens { fill: none; stroke: #000; stroke-width: 1; }
.plus { fill: none; stroke: #000; stroke-width: 1.500; }
.hand { fill: none; stroke: #000; stroke-width: 2.500; }
.ustaw { width: 161px; height: 26px; margin-top: 7px; gap: 4px; }
.u-text { white-space: nowrap; }
.okrow { display: flex; margin-top: 6px; gap: 3px; }
.ok { width: 85px; height: 36px; border: 1px solid #000; box-shadow: inset 1px 1px 0 #fff, inset -2px -2px 0 #716f64; justify-content: flex-start; padding-left: 3px; }
.oktext { margin-left: 26px; }
.cancel { width: 73px; height: 36px; justify-content: flex-start; padding-left: 7px; }
.canceltext { margin-left: 11px; }
.okmark { fill: none; stroke: #000080; stroke-width: 2.500; }
.okmark2 { fill: none; stroke: #2fa82f; stroke-width: 2; }
.xmark { fill: none; stroke: #a81818; stroke-width: 3.500; }
.defs { position: absolute; }
```
